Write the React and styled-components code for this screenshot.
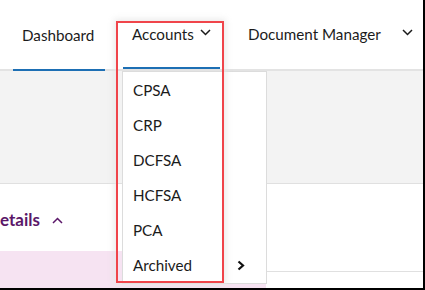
import React from 'react';
import styled, { createGlobalStyle } from 'styled-components';

const Global = createGlobalStyle`
  html, body { margin: 0; padding: 0; background: #fff; }
  body { font-family: Lato, "Open Sans", sans-serif; }
`;

const Frame = styled.div`
  position: relative;
  width: 425px;
  height: 290px;
  box-sizing: border-box;
  border-right: 2px solid #000;
  border-bottom: 2px solid #000;
  overflow: hidden;
  display: flex;
  flex-direction: column;
  font-family: Lato, "Open Sans", sans-serif;
  color: #1b1b1b;
  background: #fff;
`;

const Nav = styled.nav`
  display: flex;
  align-items: stretch;
  height: 71px;
  flex: none;
  box-sizing: border-box;
  border-bottom: 2px solid #e3e3e3;
  padding-left: 13px;
`;

const NavItem = styled.div`
  display: flex;
  align-items: center;
  box-sizing: border-box;
  width: ${(p) => p.$w}px;
  margin-left: ${(p) => p.$ml || 0}px;
  padding-left: 9px;
  margin-bottom: ${(p) => (p.$active ? -2 : 0)}px;
  border-bottom: 2px solid ${(p) => (p.$active || p.$open ? '#1d6fb4' : 'transparent')};
  font-size: 15.2px;
  line-height: 20px;
  color: #1b1b1b;
  white-space: nowrap;
`;

const Chevron = styled.svg`
  flex: none;
  margin-left: ${(p) => p.$ml}px;
  margin-top: ${(p) => p.$mt ?? -2}px;
`;

const GrayBand = styled.div`
  height: 112px;
  flex: none;
  background: #f3f3f3;
  border-bottom: 1px solid #e0e0e0;
`;

const Section = styled.div`
  flex: 1;
  display: grid;
  grid-template-columns: 266px 1fr;
`;

const LeftCol = styled.div`
  display: flex;
  flex-direction: column;
`;

const Heading = styled.div`
  height: 67px;
  box-sizing: border-box;
  padding-top: 25px;
  display: flex;
  align-items: flex-start;
  font-size: 17px;
  line-height: 22px;
  font-weight: 700;
  color: #5b1769;
`;

const Pink = styled.div`
  flex: 1;
  background: #f6e3f2;
`;

const RightCol = styled.div`
  padding-top: 87px;
`;

const Rule = styled.div`
  border-top: 1px solid #e0e0e0;
`;

const Menu = styled.ul`
  position: absolute;
  left: 122px;
  top: 71px;
  width: 145px;
  height: 213px;
  box-sizing: border-box;
  margin: 0;
  padding: 0;
  list-style: none;
  background: #fff;
  border: 1px solid #dcdcdc;
  display: flex;
  flex-direction: column;
`;

const MenuItem = styled.li`
  flex: 1;
  display: flex;
  align-items: center;
  justify-content: space-between;
  padding: 0 21px 0 10px;
  font-size: 15.2px;
  line-height: 20px;
  color: #1b1b1b;
`;

const Highlight = styled.div`
  position: absolute;
  left: 116px;
  top: 21px;
  width: 108px;
  height: 262px;
  box-sizing: border-box;
  border: 2px solid #f0454b;
  box-shadow: 0 0 6px 2px rgba(232, 232, 232, 0.85);
  pointer-events: none;
`;

const Down = ({ ml }) => (
  <Chevron $ml={ml} width="11" height="7" viewBox="0 0 11 7">
    <polyline points="1,1 5.5,5.5 10,1" fill="none" stroke="#1b1b1b" strokeWidth="1.5" />
  </Chevron>
);

const items = ['CPSA', 'CRP', 'DCFSA', 'HCFSA', 'PCA'];

export default function App() {
  return (
    <>
      <Global />
      <Frame>
        <Nav>
          <NavItem $w={92} $active>Dashboard</NavItem>
          <NavItem $w={97} $ml={18} $open>
            Accounts
            <Down ml={6} />
          </NavItem>
          <NavItem $w={180} $ml={19}>
            Document Manager
            <Down ml={21} />
          </NavItem>
        </Nav>
        <GrayBand />
        <Section>
          <LeftCol>
            <Heading>
              etails
              <Chevron $ml={12} $mt={8} width="11" height="7" viewBox="0 0 11 7">
                <polyline points="1,6 5.5,1.5 10,6" fill="none" stroke="#5b1769" strokeWidth="1.5" />
              </Chevron>
            </Heading>
            <Pink />
          </LeftCol>
          <RightCol>
            <Rule />
          </RightCol>
        </Section>
        <Menu>
          {items.map((t) => (
            <MenuItem key={t}>{t}</MenuItem>
          ))}
          <MenuItem>
            Archived
            <svg width="8" height="11" viewBox="0 0 8 11">
              <polyline points="1.5,1.5 6,5.5 1.5,9.5" fill="none" stroke="#111" strokeWidth="2.2" />
            </svg>
          </MenuItem>
        </Menu>
        <Highlight />
      </Frame>
    </>
  );
}
